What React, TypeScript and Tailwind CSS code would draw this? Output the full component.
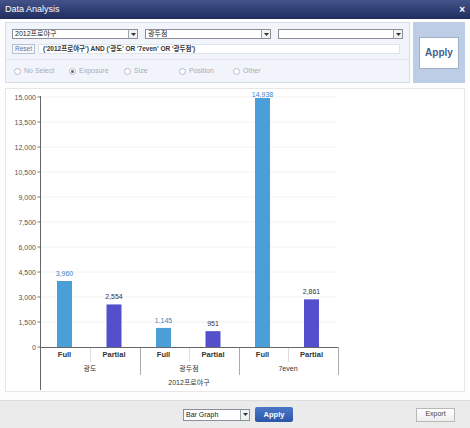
import React from "react";

const ticks = [15000, 13500, 12000, 10500, 9000, 7500, 6000, 4500, 3000, 1500, 0];
const Y0 = 347;
const SCALE = 250 / 15000;
const bars = [
  { cx: 64.5, v: 3960, full: true },
  { cx: 114, v: 2554, full: false },
  { cx: 163.5, v: 1145, full: true },
  { cx: 213, v: 951, full: false },
  { cx: 262.5, v: 14938, full: true },
  { cx: 311.5, v: 2861, full: false },
];
const groups = [
  { cx: 90, label: "광도" },
  { cx: 189, label: "광두점" },
  { cx: 288, label: "7even" },
];

function Arrow() {
  return (
    <div className="flex h-full w-[9px] items-center justify-center border-l border-[#9aa] bg-[#f2f2f2]">
      <svg width="5" height="3" viewBox="0 0 5 3">
        <path d="M0 0 L5 0 L2.5 3 Z" fill="#333" />
      </svg>
    </div>
  );
}

function Select({ w, text }: { w: string; text: string }) {
  return (
    <div className={`flex h-[10px] items-stretch border border-[#8a8f99] bg-white ${w}`}>
      <div className="flex-1 overflow-hidden whitespace-nowrap pl-[2px] text-[7px] leading-[8px] text-[#222]">{text}</div>
      <Arrow />
    </div>
  );
}

function Radio({ label, checked, w }: { label: string; checked?: boolean; w: string }) {
  return (
    <div className={`flex items-center gap-[3px] ${w}`}>
      <div className="flex h-[7px] w-[7px] items-center justify-center rounded-full border border-[#b8bcc4] bg-white">
        {checked && <div className="h-[3px] w-[3px] rounded-full bg-[#666]" />}
      </div>
      <span className="text-[7px] text-[#a8acb4]">{label}</span>
    </div>
  );
}

export default function App() {
  const font = { fontFamily: '"Liberation Sans", "Noto Sans CJK KR", sans-serif' };
  return (
    <div className="relative h-[428px] w-[470px] overflow-hidden bg-[#fdfdfd]" style={font}>
      {/* title bar */}
      <div className="flex h-[19px] items-center justify-between bg-gradient-to-b from-[#44538a] to-[#1f2d5e] px-[5px]">
        <span className="text-[9px] text-white">Data Analysis</span>
        <span className="text-[10px] font-bold leading-none text-white">×</span>
      </div>

      {/* top panel */}
      <div className="mx-[5px] mt-[3px] flex h-[61px] gap-[3px]">
        <div className="flex flex-1 flex-col border border-[#d7dde8] bg-[#f1f5fb]">
          <div className="flex flex-col gap-[5px] px-[6px] pt-[6px]">
            <div className="flex gap-[7px]">
              <Select w="w-[126px]" text="2012프로야구" />
              <Select w="w-[126px]" text="광두점" />
              <Select w="w-[125px]" text="" />
            </div>
            <div className="flex gap-[3px]">
              <div className="flex h-[10px] w-[23px] items-center justify-center border border-[#b7c0cc] bg-[#f5f7fa] text-[6.5px] text-[#5a78a8]">
                Reset
              </div>
              <div className="flex h-[10px] w-[362px] items-center border border-[#dfe3ea] bg-white pl-[4px] text-[6.5px] font-bold text-[#333]">
                ('2012프로야구') AND ('광도' OR '7even' OR '광두점')
              </div>
            </div>
          </div>
          <div className="mt-[5px] flex flex-1 items-center border-t border-[#e1e6ee] pl-[8px]">
            <Radio label="No Select" w="w-[55px]" />
            <Radio label="Exposure" checked w="w-[55px]" />
            <Radio label="Size" w="w-[55px]" />
            <Radio label="Position" w="w-[54px]" />
            <Radio label="Other" w="w-[50px]" />
          </div>
        </div>
        <div className="flex w-[53px] items-center justify-center bg-[#bdcde6]">
          <div className="flex h-[32px] w-[40px] items-center justify-center border border-[#9fb0c8] bg-white text-[10px] font-bold text-[#3f5f8f]">
            Apply
          </div>
        </div>
      </div>

      {/* chart panel */}
      <div className="mx-[5px] mt-[5px] h-[304px] border border-[#e6e6e6] bg-white">
        <svg width="458" height="302" viewBox="6 89 458 302" style={font}>
          {ticks.map((t) => {
            const y = Y0 - t * SCALE;
            return (
              <g key={t}>
                {t > 0 && <line x1={41} x2={337} y1={y} y2={y} stroke="#f2f2f2" strokeWidth={1} />}
                <line x1={37.5} x2={41} y1={y} y2={y} stroke="#777" strokeWidth={1} />
                <text x={36} y={y + 2.5} fontSize={7} fill="#555" textAnchor="end">
                  {t.toLocaleString("en-US")}
                </text>
              </g>
            );
          })}
          {bars.map((b, i) => {
            const h = b.v * SCALE;
            return (
              <g key={i}>
                <rect x={b.cx - 7.5} y={Y0 - h} width={15} height={h} fill={b.full ? "#4a9fd8" : "#5450cc"} />
                <text x={b.cx} y={Math.max(Y0 - h - 5, 97)} fontSize={7} fill={b.full ? "#3a86c4" : "#333"} textAnchor="middle">
                  {b.v.toLocaleString("en-US")}
                </text>
                <text x={b.cx} y={357} fontSize={7.5} fontWeight="bold" fill="#333" textAnchor="middle">
                  {b.full ? "Full" : "Partial"}
                </text>
              </g>
            );
          })}
          {groups.map((g) => (
            <g key={g.label}>
              <line x1={g.cx + 0.5} x2={g.cx + 0.5} y1={Y0} y2={362} stroke="#ddd" strokeWidth={1} />
              <line x1={g.cx + 50.5} x2={g.cx + 50.5} y1={Y0} y2={375} stroke="#aaa" strokeWidth={1} />
              <text x={g.cx} y={371} fontSize={7} fill="#333" textAnchor="middle">
                {g.label}
              </text>
            </g>
          ))}
          <text x={189} y={385} fontSize={7} fill="#333" textAnchor="middle">
            2012프로야구
          </text>
          <line x1={40.5} x2={40.5} y1={96} y2={390} stroke="#666" strokeWidth={1} />
          <line x1={40} x2={338} y1={Y0 + 0.5} y2={Y0 + 0.5} stroke="#666" strokeWidth={1} />
        </svg>
      </div>

      {/* bottom bar */}
      <div className="absolute bottom-0 left-0 right-0 flex h-[28px] items-center border-t border-[#ddd] bg-[#ebebeb]">
        <div className="ml-[183px] flex h-[12px] w-[67px] items-stretch border border-[#8a8f99] bg-white">
          <div className="flex-1 pl-[2px] text-[7px] leading-[10px] text-[#222]">Bar Graph</div>
          <Arrow />
        </div>
        <div className="ml-[5px] flex h-[15px] w-[38px] items-center justify-center rounded-[2px] bg-gradient-to-b from-[#4a78c8] to-[#2c56a8] text-[7.5px] font-bold text-white">
          Apply
        </div>
        <div className="ml-[123px] flex h-[14px] w-[39px] items-center justify-center border border-[#b8b8b8] bg-gradient-to-b from-white to-[#eee] text-[7px] text-[#444]">
          Export
        </div>
      </div>
    </div>
  );
}
